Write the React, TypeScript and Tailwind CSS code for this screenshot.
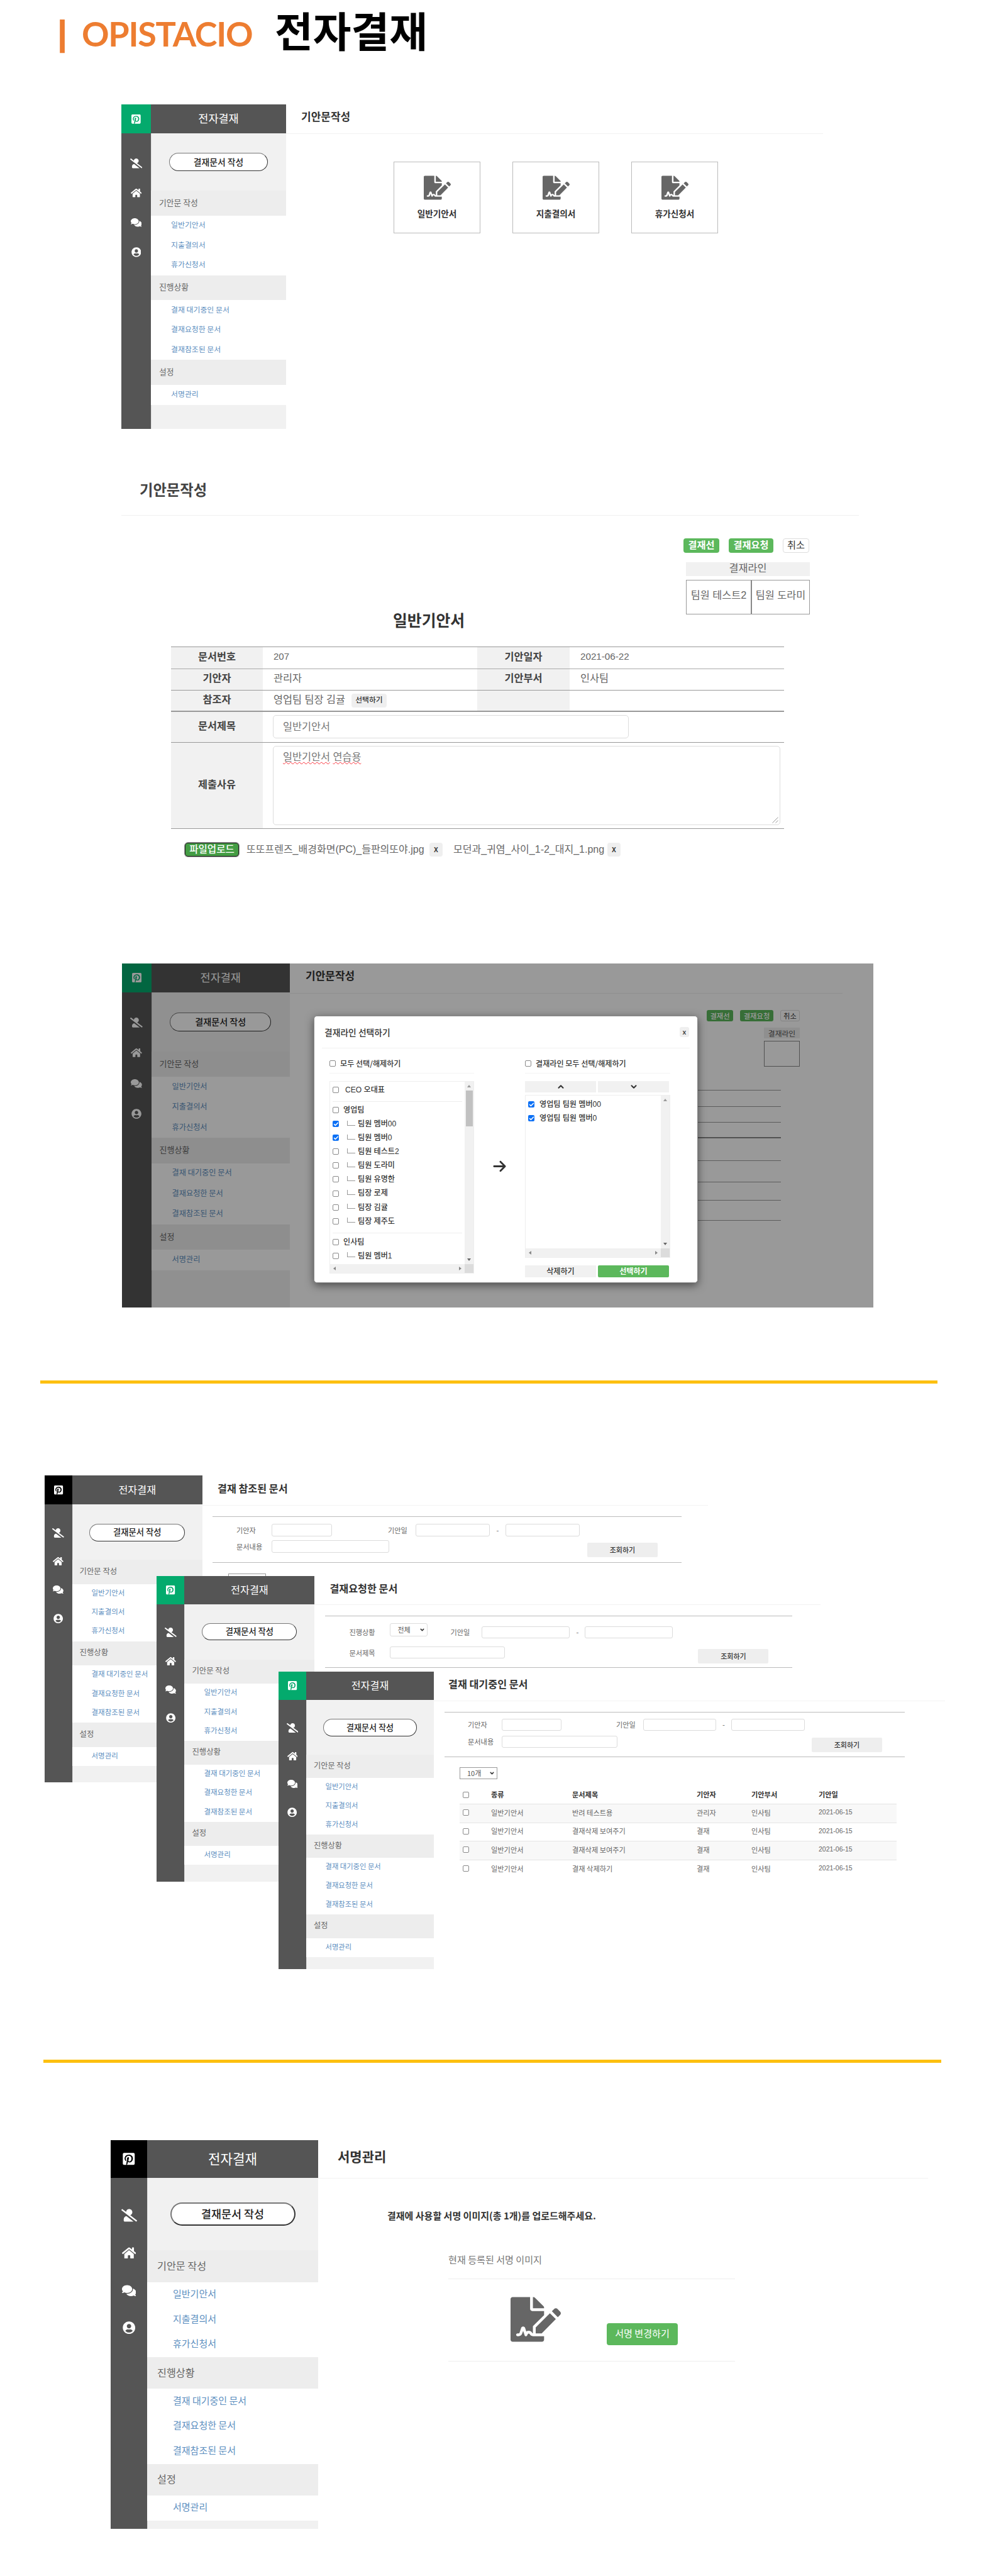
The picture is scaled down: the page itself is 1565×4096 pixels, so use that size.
import React from 'react';
import {
  FaUserSlash,
  FaHome,
  FaComments,
  FaUserCircle,
  FaPinterestSquare,
  FaFileSignature,
} from 'react-icons/fa';
import { FaArrowRight } from 'react-icons/fa6';
import { Check, ChevronDown, ChevronUp } from 'lucide-react';

const menuGroups = [
  { title: '기안문 작성', items: ['일반기안서', '지출결의서', '휴가신청서'] },
  { title: '진행상황', items: ['결재 대기중인 문서', '결재요청한 문서', '결재참조된 문서'] },
  { title: '설정', items: ['서명관리'] },
];

// Dimensions of the side navigation for each window size.
const dims = {
  draft:
    '[--rail:47px] [--menu:215px] [--head:46px] [--area:91px] [--grp:39.8px] [--row:31.6px] [--btn-w:157px] [--btn-h:29px] [--btn-top:31px] [--step:47.2px] [--icon:15.5px] [--fs-title:17.5px] [--fs-btn:13.8px] [--fs-grp:12.8px] [--fs-item:11.9px] [--in-grp:13px] [--in-item:32px] [--bw:1px]',
  modal:
    '[--rail:46.5px] [--menu:220.5px] [--head:45.5px] [--area:94.5px] [--grp:40.3px] [--row:32.4px] [--btn-w:161px] [--btn-h:30px] [--btn-top:32.5px] [--step:48.3px] [--icon:15.8px] [--fs-title:17.5px] [--fs-btn:14.1px] [--fs-grp:13px] [--fs-item:12.2px] [--in-grp:13px] [--in-item:33px] [--bw:1px]',
  refer:
    '[--rail:43.5px] [--menu:207.5px] [--head:46px] [--area:88px] [--grp:38.7px] [--row:30.3px] [--btn-w:152px] [--btn-h:28px] [--btn-top:30.5px] [--step:45.3px] [--icon:15px] [--fs-title:16.2px] [--fs-btn:13.3px] [--fs-grp:12.4px] [--fs-item:11.5px] [--in-grp:12px] [--in-item:31px] [--bw:1px]',
  request:
    '[--rail:44.4px] [--menu:207px] [--head:44.6px] [--area:88.4px] [--grp:38.4px] [--row:30.2px] [--btn-w:151px] [--btn-h:27px] [--btn-top:30.8px] [--step:45.2px] [--icon:15px] [--fs-title:16.2px] [--fs-btn:13.3px] [--fs-grp:12.4px] [--fs-item:11.5px] [--in-grp:12px] [--in-item:31px] [--bw:1px]',
  waiting:
    '[--rail:44px] [--menu:203px] [--head:45px] [--area:86.6px] [--grp:37.4px] [--row:30px] [--btn-w:149px] [--btn-h:28px] [--btn-top:30px] [--step:44.6px] [--icon:15px] [--fs-title:16.2px] [--fs-btn:13.1px] [--fs-grp:12.2px] [--fs-item:11.3px] [--in-grp:12px] [--in-item:30.5px] [--bw:1px]',
  sign:
    '[--rail:58px] [--menu:272px] [--head:59.5px] [--area:115.7px] [--grp:50.4px] [--row:39.8px] [--btn-w:199px] [--btn-h:37px] [--btn-top:39.5px] [--step:59.8px] [--icon:20px] [--fs-title:21.2px] [--fs-btn:17.4px] [--fs-grp:16.2px] [--fs-item:15px] [--in-grp:16px] [--in-item:41px] [--bw:2px]',
};

function RailIcon({ children }: { children: React.ReactNode }) {
  return (
    <div className="flex h-[var(--step)] items-center justify-center text-[length:var(--icon)] text-white">
      {children}
    </div>
  );
}

function Sidebar({ size, logo = 'bg-[#04aa6d]' }: { size: string; logo?: string }) {
  return (
    <aside className={`flex h-full shrink-0 ${size}`}>
      <div className="w-[var(--rail)] bg-[#555]">
        <div className={`flex h-[var(--head)] items-center justify-center text-[length:var(--icon)] text-white ${logo}`}>
          <FaPinterestSquare className="size-[1.08em]" />
        </div>
        <div className="pt-[calc(var(--step)/2)]">
          <RailIcon><FaUserSlash className="size-[1.25em]" /></RailIcon>
          <RailIcon><FaHome className="size-[1.125em]" /></RailIcon>
          <RailIcon><FaComments className="size-[1.125em]" /></RailIcon>
          <RailIcon><FaUserCircle className="size-[1.02em]" /></RailIcon>
        </div>
      </div>
      <div className="w-[var(--menu)] bg-[#f1f1f1] shadow-[inset_1px_0_0_#ddd]">
        <div className="flex h-[var(--head)] items-center justify-center bg-[#555] pb-[2px] text-[length:var(--fs-title)] text-white">
          전자결재
        </div>
        <div className="h-[var(--area)] pt-[var(--btn-top)]">
          <button className="mx-auto flex h-[var(--btn-h)] w-[var(--btn-w)] items-center justify-center rounded-full border-[length:var(--bw)] border-t-[#777] border-r-[#333] border-b-[#333] border-l-[#777] bg-white pb-px text-[length:var(--fs-btn)] font-medium text-[#222]">
            결재문서 작성
          </button>
        </div>
        {menuGroups.map((g) => (
          <div key={g.title}>
            <div className="flex h-[var(--grp)] items-center bg-[#ededed] pb-[3px] pl-[var(--in-grp)] text-[length:var(--fs-grp)] text-[#666]">
              {g.title}
            </div>
            {g.items.map((i) => (
              <div
                key={i}
                className="flex h-[var(--row)] items-center bg-white pb-[3px] pl-[var(--in-item)] text-[length:var(--fs-item)] text-[#5d8fbf]"
              >
                {i}
              </div>
            ))}
          </div>
        ))}
      </div>
    </aside>
  );
}

function Box({ className = '', on = false }: { className?: string; on?: boolean }) {
  return on ? (
    <span className={`flex size-[10px] shrink-0 items-center justify-center rounded-[2px] bg-[#0b70f5] text-white ${className}`}>
      <Check className="size-[9px]" strokeWidth={4} />
    </span>
  ) : (
    <span className={`size-[10px] shrink-0 rounded-[2px] border border-[#8a8a8a] bg-white ${className}`} />
  );
}

function Field({ className }: { className: string }) {
  return <span className={`shrink-0 rounded-[3px] border border-[#dcdcdc] bg-white ${className}`} />;
}

function Intro() {
  return (
    <header className="flex h-[166px] items-start pl-[92px] whitespace-nowrap">
      <h1 className="mt-[22px] flex font-['Lato',sans-serif] text-[54px] leading-[64px] font-bold text-[#ed7d31]">
        <span className="w-[38px] [-webkit-text-stroke:2.5px_#ed7d31]">|</span>
        <span className="w-[307px] tracking-[-1.3px]">OPISTACIO</span>
      </h1>
      <span className="mt-[7px] text-[66px] leading-[78px] font-bold text-black">전자결재</span>
    </header>
  );
}

function DraftPicker() {
  return (
    <section className="ml-[193px] flex h-[516px] w-[1116px]">
      <Sidebar size={dims.draft} />
      <div className="flex-1">
        <div className="flex h-[47px] items-center border-b border-[#f2f2f2] pb-[8px] pl-[24px] text-[17px] font-bold text-[#333]">
          기안문작성
        </div>
        <div className="mt-[44px] ml-[171px] flex gap-[51px]">
          {menuGroups[0].items.map((name) => (
            <div key={name} className="flex h-[114px] w-[138px] flex-col items-center border border-[#bbb] pt-[19px]">
              <FaFileSignature className="size-[43px] text-[#666]" />
              <span className="mt-[9px] text-[13.6px] leading-[20px] font-bold text-[#333]">{name}</span>
            </div>
          ))}
        </div>
      </div>
    </section>
  );
}

const th = 'flex items-center justify-center bg-[#f1f1f1] pb-[3px] font-bold text-[#444]';
const td = 'flex items-center pb-[3px] pl-[17px]';

function RemoveButton() {
  return (
    <span className="flex h-[22px] w-[21px] items-center justify-center rounded-[4px] bg-[#efefef] pb-[2px] font-['Noto_Sans_CJK_KR',sans-serif] text-[13px] font-medium text-[#333]">
      x
    </span>
  );
}

function DraftForm() {
  return (
    <section className="mt-[63px] ml-[193px] h-[645px] w-[1173px] font-['Liberation_Sans','Noto_Sans_CJK_KR',sans-serif] text-[16.3px] text-[#666]">
      <div className="flex h-[75px] items-center border-b border-[#f0f0f0] pb-[4px] pl-[29px] text-[23.3px] font-bold text-[#444]">
        기안문작성
      </div>
      <div className="mt-[36px] mr-[79px] flex items-start justify-end gap-[15px] text-[15.2px]">
        <span className="flex h-[23px] w-[57px] items-center justify-center rounded-[4px] bg-[#5cb85c] font-bold text-white">결재선</span>
        <span className="flex h-[23px] w-[71px] items-center justify-center rounded-[4px] bg-[#5cb85c] font-bold text-white">결재요청</span>
        <span className="flex h-[23px] w-[42px] items-center justify-center rounded-[4px] border border-[#ddd] text-[#333]">취소</span>
      </div>
      <div className="mt-[15px] ml-[898px] w-[197px]">
        <div className="flex h-[22px] items-center justify-center bg-[#f1f1f1] pb-[4px]">결재라인</div>
        <div className="mt-[6px] flex h-[55px] border border-[#999]">
          <div className="flex w-[104px] items-center justify-center border-r-2 border-[#888] pb-[6px]">팀원 테스트2</div>
          <div className="flex flex-1 items-center justify-center pb-[6px]">팀원 도라미</div>
        </div>
      </div>
      <h2 className="mt-[-6px] ml-[432px] text-[24.8px] leading-[34px] font-bold text-[#333]">일반기안서</h2>
      <div className="mt-[23px] ml-[79px] w-[975px] border-t border-[#999]">
        <div className="grid h-[34.5px] grid-cols-[146px_341px_147px_1fr] border-b border-[#aaa]">
          <div className={th}>문서번호</div>
          <div className={`${td} pb-0 text-[15px]`}>207</div>
          <div className={th}>기안일자</div>
          <div className={`${td} pb-0 text-[15.2px]`}>2021-06-22</div>
        </div>
        <div className="grid h-[34px] grid-cols-[146px_341px_147px_1fr] border-b border-[#999]">
          <div className={th}>기안자</div>
          <div className={td}>관리자</div>
          <div className={th}>기안부서</div>
          <div className={td}>인사팀</div>
        </div>
        <div className="grid h-[34.5px] grid-cols-[146px_341px_147px_1fr] border-b-2 border-[#999]">
          <div className={th}>참조자</div>
          <div className={td}>
            영업팀 팀장 김귤
            <span className="mt-[3px] ml-[10px] flex h-[22px] w-[56px] items-center justify-center rounded-[4px] bg-[#efefef] text-[11.8px] font-medium text-[#333]">
              선택하기
            </span>
          </div>
          <div className={th} />
        </div>
        <div className="grid h-[48.5px] grid-cols-[146px_1fr] border-b border-[#999]">
          <div className={th}>문서제목</div>
          <div className="pt-[5px] pl-[16px]">
            <div className="flex h-[37px] w-[566px] items-center rounded-[5px] border border-[#ddd] pb-px pl-[15px] text-[#777]">일반기안서</div>
          </div>
        </div>
        <div className="grid h-[137px] grid-cols-[146px_1fr] border-b border-[#999]">
          <div className={th}>제출사유</div>
          <div className="pt-[5px] pl-[16px]">
            <div className="flex h-[126px] w-[807px] justify-between rounded-[5px] border border-[#ddd] pt-[4px] pl-[15px] text-[#777]">
              <span className="h-[24px] leading-[24px]">
                <span className="underline decoration-red-500 decoration-wavy decoration-[1px] underline-offset-[2px]">일반기안서</span>{' '}
                <span className="underline decoration-red-500 decoration-wavy decoration-[1px] underline-offset-[2px]">연습용</span>
              </span>
              <svg className="mr-[2px] mb-[2px] size-[10px] self-end" viewBox="0 0 10 10" stroke="#999" fill="none">
                <path d="M0.5 9.5 9.5 0.5M5.5 9.5 9.5 5.5" />
              </svg>
            </div>
          </div>
        </div>
      </div>
      <div className="mt-[21px] ml-[101px] flex items-center whitespace-nowrap">
        <span className="mr-[12px] flex h-[22px] w-[86px] items-center justify-center rounded-[5px] border border-[#222] bg-[#449d44] text-[15.6px] leading-none font-medium text-white ring-1 ring-[#999]">
          파일업로드
        </span>
        <span className="w-[291px] text-[16px]">또또프렌즈_배경화면(PC)_들판의또야.jpg</span>
        <RemoveButton />
        <span className="ml-[17px] w-[245px] text-[16px]">모던과_귀염_사이_1-2_대지_1.png</span>
        <RemoveButton />
      </div>
    </section>
  );
}

function VScroll({ thumb = false }: { thumb?: boolean }) {
  return (
    <div className="flex w-[14px] flex-col items-center justify-between bg-[#f1f1f1] py-[5px]">
      <div className="flex w-full flex-col items-center">
        <svg className="h-[4px] w-[6px]" viewBox="0 0 6 4" fill="#999"><path d="M3 0 6 4H0z" /></svg>
        {thumb && <span className="mt-[5px] h-[57px] w-[11px] bg-[#c1c1c1]" />}
      </div>
      <svg className="h-[4px] w-[6px]" viewBox="0 0 6 4" fill="#666"><path d="M3 4 6 0H0z" /></svg>
    </div>
  );
}

function HScroll() {
  return (
    <div className="flex h-[14px] bg-[#f1f1f1]">
      <div className="flex flex-1 items-center justify-between px-[5px]">
        <svg className="h-[6px] w-[4px]" viewBox="0 0 4 6" fill="#888"><path d="M0 3 4 0V6z" /></svg>
        <svg className="h-[6px] w-[4px]" viewBox="0 0 4 6" fill="#888"><path d="M4 3 0 0V6z" /></svg>
      </div>
      <span className="w-[14px] bg-[#dcdcdc]" />
    </div>
  );
}

function Member({ name, on = false }: { name: string; on?: boolean }) {
  return (
    <div className="flex h-[22.1px] items-center">
      <Box on={on} />
      <span className="-mt-[3px] ml-[13px] h-[8px] w-[13px] border-b border-l border-[#999]" />
      <span className="ml-[4px]">{name}</span>
    </div>
  );
}

function Team({ name }: { name: string }) {
  return (
    <div className="flex h-[22px] items-center gap-[7px]">
      <Box />
      {name}
    </div>
  );
}

function LineDialog() {
  return (
    <div className="absolute top-[83px] left-[305px] h-[425px] w-[611px] rounded-[5px] border border-[#888] bg-white px-[12px] text-[12.1px] font-medium whitespace-nowrap text-[#333] shadow-[0_4px_14px_rgba(0,0,0,0.5)]">
      <div className="flex h-[51px] items-center justify-between border-b border-[#f0f0f0] pr-px pl-[4px] text-[13.8px]">
        결재라인 선택하기
        <span className="flex h-[16px] w-[15px] items-center justify-center rounded-[3px] bg-[#efefef] pb-[2px] text-[11px]">x</span>
      </div>
      <div className="flex pl-[12px]">
        <div className="w-[230px]">
          <div className="flex h-[40px] items-center gap-[7px] border-b border-[#f3f3f3] pt-[9px]">
            <Box />
            모두 선택/해제하기
          </div>
          <div className="mt-[12px] h-[306px] border border-[#eee]">
            <div className="flex h-[290px]">
              <div className="flex-1 overflow-hidden pt-[2px] pr-[4px] pl-[4px] font-['Liberation_Sans','Noto_Sans_CJK_KR',sans-serif]">
                <div className="flex h-[22px] items-center gap-[10px]">
                  <Box />
                  <span>CEO 오대표</span>
                </div>
                <div className="mt-[7px] mb-[2px] h-px bg-[#eee]" />
                <Team name="영업팀" />
                <Member name="팀원 멤버00" on />
                <Member name="팀원 멤버0" on />
                <Member name="팀원 테스트2" />
                <Member name="팀원 도라미" />
                <Member name="팀원 유명한" />
                <Member name="팀장 로제" />
                <Member name="팀장 김귤" />
                <Member name="팀장 제주도" />
                <div className="mt-[7px] mb-[3px] h-px bg-[#eee]" />
                <Team name="인사팀" />
                <Member name="팀원 멤버1" />
              </div>
              <VScroll thumb />
            </div>
            <HScroll />
          </div>
        </div>
        <div className="flex w-[81px] justify-center pt-[176px]">
          <FaArrowRight className="size-[23px] text-[#333]" />
        </div>
        <div className="w-[231px]">
          <div className="flex h-[40px] items-center gap-[7px] border-b border-[#f3f3f3] pt-[9px]">
            <Box />
            결재라인 모두 선택/해제하기
          </div>
          <div className="mt-[12px] flex gap-[3px] pr-[2px]">
            <span className="flex h-[18px] flex-1 items-center justify-center bg-[#f1f1f1]"><ChevronUp className="size-[14px]" strokeWidth={3.5} /></span>
            <span className="flex h-[18px] flex-1 items-center justify-center bg-[#f1f1f1]"><ChevronDown className="size-[14px]" strokeWidth={3.5} /></span>
          </div>
          <div className="mt-[4px] h-[259px] border border-[#eee]">
            <div className="flex h-[243px]">
              <div className="flex-1 pt-[3px] pl-[4px] font-['Liberation_Sans','Noto_Sans_CJK_KR',sans-serif]">
                <div className="flex h-[22px] items-center gap-[8px]"><Box on />영업팀 팀원 멤버00</div>
                <div className="flex h-[22px] items-center gap-[8px]"><Box on />영업팀 팀원 멤버0</div>
              </div>
              <VScroll />
            </div>
            <HScroll />
          </div>
          <div className="mt-[12px] flex gap-[3px] pr-[2px]">
            <span className="flex h-[19px] flex-1 items-center justify-center bg-[#f1f1f1]">삭제하기</span>
            <span className="flex h-[19px] flex-1 items-center justify-center rounded-[2px] bg-[#5cb85c] font-bold text-white">선택하기</span>
          </div>
        </div>
      </div>
    </div>
  );
}

function LineSelection() {
  return (
    <section className="relative mt-[142px] ml-[194px] flex h-[547px] w-[1195px] overflow-hidden bg-white">
      <Sidebar size={dims.modal} />
      <div className="flex-1">
        <div className="mr-[49px] flex h-[48px] items-center border-b border-[#eee] pb-[10px] pl-[25px] text-[17px] font-bold text-[#333]">
          기안문작성
        </div>
        <div className="mt-[26px] mr-[117px] flex justify-end gap-[11px] text-[11.3px]">
          <span className="flex h-[18px] w-[42px] items-center justify-center rounded-[3px] bg-[#5cb85c] font-medium text-white">결재선</span>
          <span className="flex h-[18px] w-[53px] items-center justify-center rounded-[3px] bg-[#5cb85c] font-medium text-white">결재요청</span>
          <span className="flex h-[18px] w-[31px] items-center justify-center rounded-[3px] border border-[#ddd] text-[#333]">취소</span>
        </div>
        <div className="mt-[10px] ml-[754px] w-[57px]">
          <div className="flex h-[17px] items-center justify-center bg-[#eee] text-[11.8px] text-[#555]">결재라인</div>
          <div className="mt-[4px] h-[41px] border border-[#888]" />
        </div>
        <div className="mt-[37px] mr-[147px] ml-[230px] border-t border-[#999]">
          <div className="h-[25.5px] border-b border-[#999]" />
          <div className="h-[25px] border-b border-[#999]" />
          <div className="h-[25.5px] border-b-2 border-[#888]" />
          <div className="h-[36px] border-b border-[#999]" />
          <div className="h-[33.5px] border-b border-[#999]" />
          <div className="h-[29px] border-b border-[#999]" />
          <div className="h-[32.5px] border-b border-[#999]" />
        </div>
      </div>
      <div className="absolute inset-0 bg-black/40" />
      <LineDialog />
    </section>
  );
}

function SearchButton({ className }: { className: string }) {
  return (
    <span className={`flex h-[23px] w-[112px] shrink-0 items-center justify-center rounded-[2px] bg-[#eee] pb-px text-[11px] font-medium text-[#333] ${className}`}>
      조회하기
    </span>
  );
}

function Select({ label, className }: { label: string; className: string }) {
  return (
    <span className={`flex shrink-0 items-center justify-between border pr-[3px] pl-[11px] text-[11px] text-[#555] ${className}`}>
      {label}
      <ChevronDown className="size-[9px] text-[#333]" strokeWidth={4} />
    </span>
  );
}

const docs = [
  ['반려 테스트용', '관리자'],
  ['결재삭제 보여주기', '결재'],
  ['결재삭제 보여주기', '결재'],
  ['결재 삭제하기', '결재'],
];

const docCols = 'grid grid-cols-[50px_129px_198px_87px_107px_1fr] items-center';

function DocumentWindows() {
  return (
    <section className="relative mt-[146px] h-[785px] whitespace-nowrap">
      <div className="absolute top-0 left-[71px] flex h-[488px] w-[1055px] bg-white">
        <Sidebar size={dims.refer} logo="bg-black" />
        <div className="flex-1">
          <div className="flex h-[48px] items-center border-b border-[#f2f2f2] pb-[6px] pl-[24px] text-[16.2px] font-bold text-[#333]">결재 참조된 문서</div>
          <div className="mt-[17px] ml-[16px] h-[74px] w-[746px] border-y border-[#bbb] pl-[38px] text-[11.2px] text-[#666]">
            <div className="mt-[11px] flex h-[20px] items-center">
              <span className="w-[56px]">기안자</span>
              <Field className="h-[20px] w-[96px]" />
              <span className="ml-[89px] w-[44px]">기안일</span>
              <Field className="h-[20px] w-[118px]" />
              <span className="w-[25px] text-center">-</span>
              <Field className="h-[20px] w-[118px]" />
            </div>
            <div className="mt-[6px] flex h-[20px] items-start">
              <span className="w-[56px] leading-[20px]">문서내용</span>
              <Field className="h-[20px] w-[187px]" />
              <SearchButton className="mt-[4px] ml-[315px]" />
            </div>
          </div>
          <Select label="10개" className="mt-[17px] ml-[41px] h-[19px] w-[60px] border-[#999]" />
        </div>
      </div>

      <div className="absolute top-[160px] left-[249px] flex h-[486px] w-[1056px] bg-white">
        <Sidebar size={dims.request} />
        <div className="flex-1">
          <div className="flex h-[46px] items-center border-b border-[#f2f2f2] pb-[7px] pl-[24px] text-[16.2px] font-bold text-[#333]">결재요청한 문서</div>
          <div className="mt-[17px] ml-[17px] h-[83px] w-[743px] border-y border-[#bbb] pl-[38px] text-[11.2px] text-[#666]">
            <div className="mt-[11px] flex h-[26px] items-end">
              <span className="mb-[3px] w-[65px]">진행상황</span>
              <Select label="전체" className="mb-[5px] h-[21px] w-[60px] rounded-[3px] border-[#ddd]" />
              <span className="mb-[3px] ml-[36px] w-[50px]">기안일</span>
              <Field className="mb-[2px] h-[19px] w-[140px]" />
              <span className="mb-[3px] w-[24px] text-center">-</span>
              <Field className="mb-[2px] h-[19px] w-[140px]" />
            </div>
            <div className="mt-[11px] flex h-[20px] items-start">
              <span className="w-[65px] leading-[20px]">문서제목</span>
              <Field className="h-[19px] w-[183px]" />
              <SearchButton className="mt-[4px] ml-[307px]" />
            </div>
          </div>
        </div>
      </div>

      <div className="absolute top-[312px] left-[443px] flex h-[473px] w-[1060px] bg-white">
        <Sidebar size={dims.waiting} />
        <div className="flex-1">
          <div className="flex h-[47px] items-center border-b border-[#f4f4f4] pb-[7px] pl-[23px] text-[16.2px] font-bold text-[#333]">결재 대기중인 문서</div>
          <div className="mt-[17px] ml-[17px] h-[72px] w-[732px] border-y border-[#bbb] pl-[37px] text-[11.2px] text-[#666]">
            <div className="mt-[10px] flex h-[19px] items-center">
              <span className="w-[54px]">기안자</span>
              <Field className="h-[19px] w-[95px]" />
              <span className="ml-[87px] w-[43px]">기안일</span>
              <Field className="h-[19px] w-[116px]" />
              <span className="w-[24px] text-center">-</span>
              <Field className="h-[19px] w-[117px]" />
            </div>
            <div className="mt-[8px] flex h-[19px] items-start">
              <span className="w-[54px] leading-[19px]">문서내용</span>
              <Field className="h-[19px] w-[184px]" />
              <SearchButton className="mt-[3px] ml-[309px]" />
            </div>
          </div>
          <div className="mt-[16px] ml-[41px] w-[695px] text-[11.2px] text-[#666]">
            <Select label="10개" className="h-[19px] w-[60px] border-[#999]" />
            <div className={`mt-[10px] h-[30px] border-b border-[#e4e4e4] font-bold text-[#333] ${docCols}`}>
              <Box className="ml-[5px]" />
              <span>종류</span>
              <span>문서제목</span>
              <span>기안자</span>
              <span>기안부서</span>
              <span>기안일</span>
            </div>
            {docs.map(([title, writer], i) => (
              <div
                key={i}
                className={`h-[29.5px] border-[#e4e4e4] pb-[2px] ${i % 2 ? '' : 'bg-[#f8f8f8]'} ${i < 3 ? 'border-b' : ''} ${docCols}`}
              >
                <Box className="ml-[5px]" />
                <span>일반기안서</span>
                <span>{title}</span>
                <span>{writer}</span>
                <span>인사팀</span>
                <span className="font-['Liberation_Sans',sans-serif] text-[10.5px]">2021-06-15</span>
              </div>
            ))}
          </div>
        </div>
      </div>
    </section>
  );
}

function SignatureSettings() {
  return (
    <section className="mt-[123px] ml-[176px] flex h-[618px] w-[1300px] whitespace-nowrap">
      <Sidebar size={dims.sign} logo="bg-black" />
      <div className="flex-1">
        <div className="flex h-[61px] items-center border-b border-[#f2f2f2] pb-[9px] pl-[31px] text-[21px] font-bold text-[#333]">서명관리</div>
        <p className="mt-[47px] ml-[110px] text-[15px] leading-[24px] font-bold text-[#333]">
          결재에 사용할 서명 이미지(총 1개)를 업로드해주세요.
        </p>
        <div className="mt-[45px] ml-[207px] w-[456px] text-[15.1px]">
          <p className="h-[44px] border-b border-[#eee] leading-[24px] text-[#777]">현재 등록된 서명 이미지</p>
          <div className="flex h-[131px] items-start border-b border-[#eee]">
            <FaFileSignature className="mt-[24px] ml-[99px] size-[80px] text-[#666]" />
            <span className="mt-[70px] ml-[73px] flex h-[35px] w-[113px] items-center justify-center rounded-[4px] bg-[#5cb85c] pb-[4px] text-white">
              서명 변경하기
            </span>
          </div>
        </div>
      </div>
    </section>
  );
}

export default function App() {
  return (
    <main className="flex h-[4096px] w-[1565px] flex-col overflow-hidden bg-white font-['Noto_Sans_CJK_KR',sans-serif]">
      <Intro />
      <DraftPicker />
      <DraftForm />
      <LineSelection />
      <div className="mt-[116px] ml-[64px] h-[5px] w-[1427px] shrink-0 bg-[#fdc010]" />
      <DocumentWindows />
      <div className="mt-[144px] ml-[69px] h-[5px] w-[1428px] shrink-0 bg-[#fdc010]" />
      <SignatureSettings />
    </main>
  );
}
